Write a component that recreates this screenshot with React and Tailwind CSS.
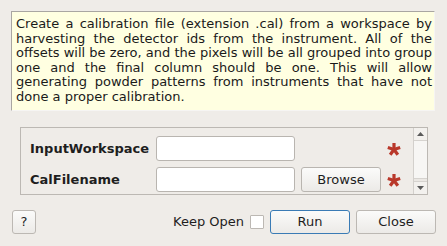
import React from "react";

function Asterisk() {
  const arms = [-90, -18, 54, 126, 198];
  return (
    <svg width="14" height="14" viewBox="-7 -7 14 14" className="shrink-0">
      {arms.map((a) => {
        const r = (a * Math.PI) / 180;
        return (
          <line
            key={a}
            x1="0"
            y1="0.5"
            x2={(6.5 * Math.cos(r)).toFixed(2)}
            y2={(0.5 + 6.5 * Math.sin(r)).toFixed(2)}
            stroke="#b9382a"
            strokeWidth="3.2"
            strokeLinecap="butt"
          />
        );
      })}
    </svg>
  );
}

function Btn({ children, className = "" }) {
  return (
    <div
      className={
        "flex items-center justify-center h-[24px] rounded-[3px] border bg-gradient-to-b from-[#fbfbfa] to-[#eceae7] text-[13px] text-[#1e1e1e] " +
        className
      }
    >
      {children}
    </div>
  );
}

export default function App() {
  return (
    <div
      className="w-[447px] h-[246px] bg-[#efece8] overflow-hidden text-[#1e1e1e]"
      style={{ fontFamily: '"DejaVu Sans", sans-serif' }}
    >
      <div className="pt-[11px] pl-[11px]">
        <div className="w-[424px] h-[100px] bg-[#ffffe1] border-t border-l border-t-[#a9a6a2] border-l-[#a9a6a2] border-r border-b border-r-[#f6f5f3] border-b-[#f6f5f3] pt-[5px] pl-[4px] pr-[2px]">
          <p className="text-[13px] leading-[14.5px] text-justify text-[#1a1a1a]">
            Create a calibration file (extension .cal) from a workspace by harvesting the detector ids from the instrument. All of the offsets will be zero, and the pixels will be all grouped into group one and the final column should be one. This will allow generating powder patterns from instruments that have not done a proper calibration.
          </p>
        </div>
      </div>

      <div className="ml-[20px] mt-[16px] w-[408px] h-[68px] border border-[#bcb8b3] flex">
        <div className="flex-1 pl-[9px] pt-[8px] flex flex-col gap-[6px]">
          <div className="flex items-center h-[25px]">
            <div className="w-[126px] text-[13px] font-bold">InputWorkspace</div>
            <div className="w-[139px] h-[25px] bg-white border border-[#b9b5b0] rounded-[3px]" />
            <div className="w-[92px]" />
            <Asterisk />
          </div>
          <div className="flex items-center h-[25px]">
            <div className="w-[126px] text-[13px] font-bold">CalFilename</div>
            <div className="w-[139px] h-[25px] bg-white border border-[#b9b5b0] rounded-[3px]" />
            <div className="w-[6px]" />
            <Btn className="w-[80px] h-[25px] border-[#b9b5b0]">Browse</Btn>
            <div className="w-[6px]" />
            <Asterisk />
          </div>
        </div>
        <div className="w-[14px] border-l border-[#d3d0cc] bg-[#f3f1ee] flex flex-col">
          <div className="h-[13px] flex items-center justify-center border-b border-[#d6d3cf]">
            <svg width="7" height="4" viewBox="0 0 7 4"><polygon points="0,4 7,4 3.5,0" fill="#5a5a5a" /></svg>
          </div>
          <div className="flex-1 bg-[#f7f6f4]" />
          <div className="h-[3px] border-t border-[#d6d3cf] bg-[#ebe8e4]" />
          <div className="h-[13px] flex items-center justify-center border-t border-[#d6d3cf]">
            <svg width="7" height="4" viewBox="0 0 7 4"><polygon points="0,0 7,0 3.5,4" fill="#5a5a5a" /></svg>
          </div>
        </div>
      </div>

      <div className="flex items-center mt-[15px] pl-[12px] pr-[11px]">
        <Btn className="w-[24px] border-[#bcb8b3]">?</Btn>
        <div className="flex-1" />
        <span className="text-[13px]">Keep Open</span>
        <div className="ml-[6px] w-[14px] h-[14px] bg-white border border-[#bcb8b3] rounded-[1px]" />
        <div className="w-[6px]" />
        <Btn className="w-[80px] border-[#3a7bb5] from-[#f7f8f9] to-[#e3e7ea]">Run</Btn>
        <div className="w-[6px]" />
        <Btn className="w-[80px] border-[#bcb8b3]">Close</Btn>
      </div>
    </div>
  );
}
